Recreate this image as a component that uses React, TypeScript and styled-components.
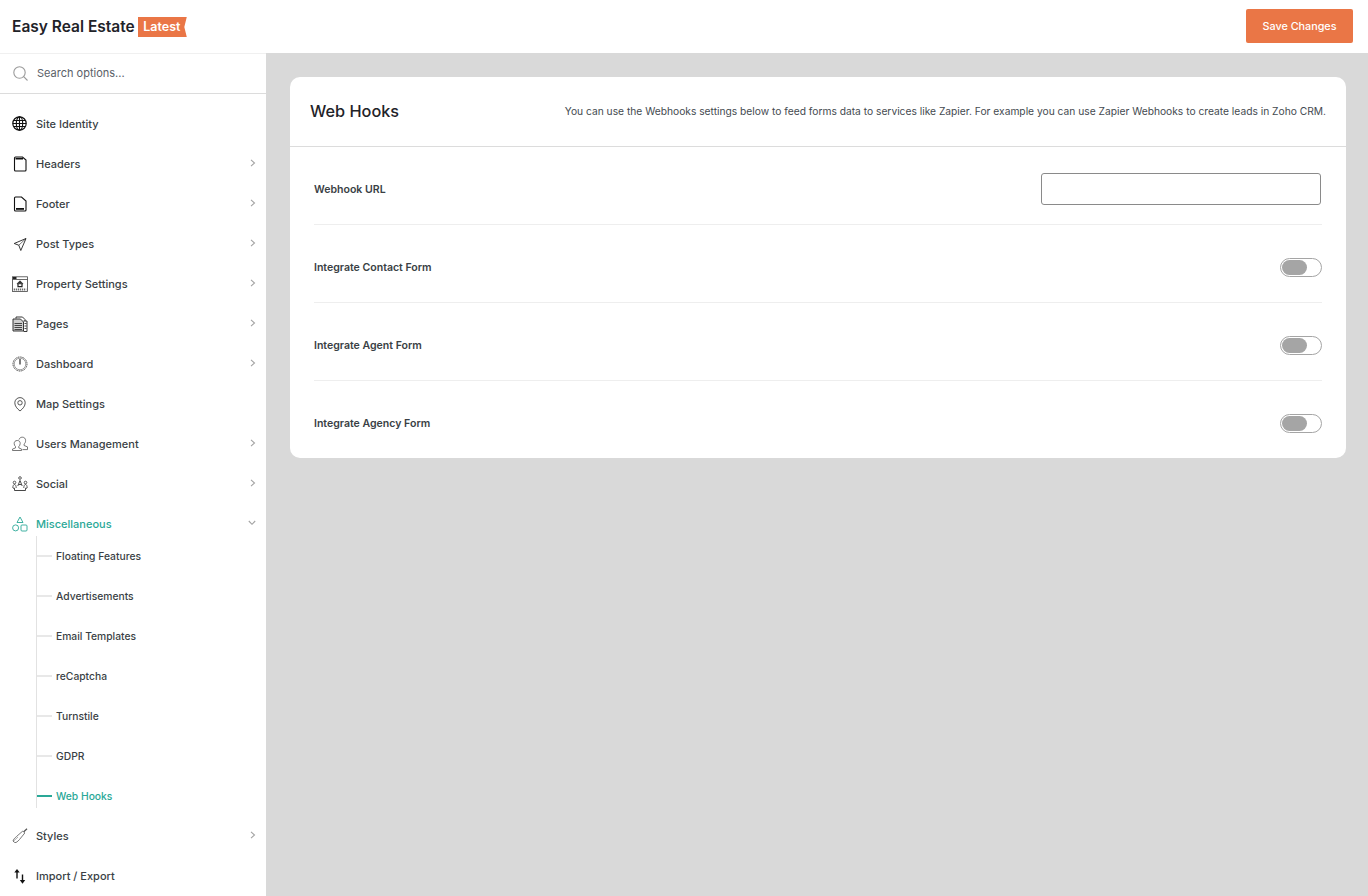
import React from "react";
import styled, { createGlobalStyle } from "styled-components";

const GlobalStyle = createGlobalStyle`
  html, body {
    margin: 0;
    padding: 0;
    height: 100%;
    overflow: hidden;
    background: #d9d9d9;
    font-family: Inter, "Noto Sans", sans-serif;
  }
  * { box-sizing: border-box; }
`;

const TEAL = "#2aa897";
const ORANGE = "#ea7646";

const Page = styled.div`
  width: 1368px;
  height: 896px;
  display: flex;
  flex-direction: column;
  overflow: hidden;
`;

const TopBar = styled.header`
  height: 53px;
  flex: none;
  background: #fff;
  display: flex;
  align-items: center;
  justify-content: space-between;
  padding: 0 15px 1px 12px;
`;

const Brand = styled.div`
  display: flex;
  align-items: center;
  gap: 3px;
`;

const BrandName = styled.span`
  font-size: 15.5px;
  line-height: 20px;
  font-weight: 600;
  margin-top: 1px;
  color: #1f2329;
`;

const Badge = styled.span`
  width: 49px;
  height: 20px;
  margin-top: 2px;
  background: ${ORANGE};
  color: #fff;
  font-size: 12.5px;
  line-height: 20px;
  font-weight: 600;
  padding-left: 5.5px;
  clip-path: polygon(0 0, 100% 0, 95% 50%, 100% 100%, 0 100%);
`;

const SaveButton = styled.button`
  width: 107px;
  height: 34px;
  border: 0;
  border-radius: 2px;
  background: ${ORANGE};
  color: #fff;
  font-family: inherit;
  font-size: 10.8px;
  font-weight: 500;
  padding: 0;
`;

const Body = styled.div`
  flex: 1;
  display: flex;
  min-height: 0;
`;

const Sidebar = styled.aside`
  width: 266px;
  flex: none;
  background: #fff;
  border-top: 1px solid #f0f0f0;
  overflow: hidden;
`;

const SearchRow = styled.div`
  height: 40px;
  display: flex;
  align-items: center;
  gap: 9px;
  padding: 0 13px 1px;
  border-bottom: 1px solid #dcdcdc;
`;

const SearchText = styled.span`
  font-size: 11px;
  color: #5a6068;
`;

const Nav = styled.nav`
  padding-top: 10px;
`;

const NavRow = styled.div<{ $active?: boolean }>`
  height: 40px;
  display: flex;
  align-items: center;
  padding: 0 10px 0 12px;
  color: ${(p) => (p.$active ? TEAL : "#3a3f45")};
  font-size: 11px;
  font-weight: ${(p) => (p.$active ? 500 : 450)};
`;

const IconSlot = styled.span`
  width: 16px;
  height: 16px;
  flex: none;
  margin-right: 8px;
  display: flex;
  svg { display: block; }
`;

const NavLabel = styled.span`
  flex: 1;
`;

const Arrow = styled.svg`
  flex: none;
  margin-top: -2px;
`;

const SubMenu = styled.div`
  position: relative;
  margin: -8px 0 0 36px;

  &::before {
    content: "";
    position: absolute;
    left: 0;
    top: 0;
    bottom: 8px;
    width: 1px;
    background: #e2e2e2;
  }
`;

const SubRow = styled.div<{ $active?: boolean }>`
  height: 40px;
  display: flex;
  align-items: center;
  gap: 4px;
  font-size: 10.3px;
  font-weight: 450;
  color: ${(p) => (p.$active ? TEAL : "#3a3f45")};

  &::before {
    content: "";
    width: 16px;
    height: 2px;
    background: ${(p) => (p.$active ? TEAL : "#e8e8e8")};
  }
`;

const Main = styled.main`
  flex: 1;
  padding: 24px 22px 0 24px;
`;

const Card = styled.section`
  background: #fff;
  border-radius: 10px;
  overflow: hidden;
`;

const CardHeader = styled.div`
  height: 70px;
  display: flex;
  align-items: center;
  justify-content: space-between;
  padding: 0 20px 2px;
  border-bottom: 1px solid #dcdcdc;
`;

const CardTitle = styled.h1`
  margin: 0;
  font-size: 16.3px;
  font-weight: 500;
  color: #1f2329;
`;

const CardNote = styled.p`
  margin: 0;
  font-size: 10.24px;
  color: #444a50;
`;

const Rows = styled.div`
  padding: 0 24px;
`;

const Row = styled.div`
  height: 78px;
  padding-top: 8px;
  display: flex;
  align-items: center;
  justify-content: space-between;
  border-bottom: 1px solid #eeeeee;
  &:last-child { border-bottom: 0; height: 77px; }
`;

const RowLabel = styled.label`
  font-size: 10.55px;
  font-weight: 600;
  color: #3a3f45;
`;

const UrlInput = styled.input`
  width: 280px;
  height: 32px;
  margin: 0 1px 2px 0;
  border: 1px solid #8a8a8a;
  border-radius: 3px;
  background: #fff;
  outline: none;
`;

const Toggle = styled.span`
  width: 42px;
  height: 19px;
  border: 1px solid #a5a5a5;
  border-radius: 10px;
  padding: 1px;
  display: flex;

  &::before {
    content: "";
    width: 25px;
    height: 15px;
    border-radius: 8px;
    background: #a5a5a5;
  }
`;

const Svg = ({ children, color = "#111" }: { children: React.ReactNode; color?: string }) => (
  <svg width="16" height="16" viewBox="0 0 16 16" fill="none" stroke={color} strokeWidth="1">
    {children}
  </svg>
);

const icons: Record<string, React.ReactNode> = {
  globe: (
    <Svg>
      <circle cx="7.5" cy="7.500" r="6.700" strokeWidth="1.200" />
      <ellipse cx="7.500" cy="7.500" rx="3.200" ry="6.700" strokeWidth="1.100" />
      <path d="M7.500 .8v13.400M.8 7.500h13.400M1.800 4.500h11.400M1.800 10.500h11.400" strokeWidth="1.100" />
    </Svg>
  ),
  header: (
    <Svg>
      <path d="M2.500 2a1 1 0 0 1 1-1h7L14 4v10a1 1 0 0 1-1 1H3.500a1 1 0 0 1-1-1z" strokeWidth="1.100" />
      <path d="M3.500 2.700h7.500" strokeWidth="1.600" />
    </Svg>
  ),
  footer: (
    <Svg>
      <path d="M2.500 2a1 1 0 0 1 1-1h6L14 5v9a1 1 0 0 1-1 1H3.500a1 1 0 0 1-1-1z" strokeWidth="1.100" />
      <path d="M4 12.900h8" strokeWidth="1.800" />
    </Svg>
  ),
  plane: (
    <Svg color="#222">
      <path d="M14 2.500 2.200 7.500l4.600 1.700 2 5.300z" strokeWidth="0.900" strokeLinejoin="round" />
      <path d="M6.800 9.200 14 2.500" strokeWidth="0.600" />
    </Svg>
  ),
  property: (
    <Svg color="#444">
      <rect x="0.500" y="0.800" width="15" height="14.700" strokeWidth="0.800" />
      <path d="M0.500 3.500h15" strokeWidth="0.800" />
      <path d="M1 2h3.500" strokeWidth="2" stroke="#222" />
      <path d="M5 7.800 8 4.800l3 3z" fill="#333" stroke="#222" strokeWidth="0.700" />
      <path d="M6 8v2.600h4V8" stroke="#222" strokeWidth="1.200" />
      <path d="M1.800 13.600h12.400" strokeWidth="2" strokeDasharray="1 1" />
    </Svg>
  ),
  pages: (
    <Svg color="#222">
      <path d="M4 2.500V1h6.500L13 3.500V5" strokeWidth="0.900" />
      <path d="M1 3h7.500l3 3v9H1z" strokeWidth="0.900" fill="#cfcfcf" />
      <path d="M11.500 5H15v10.500H11.500" strokeWidth="0.900" />
      <path d="M2.500 7.500h7.500M2.500 9.500h7.500M2.500 11.500h7.500M2.500 13.500h7.500M12.500 7.500h2M12.500 10h2M12.500 12.500h2" strokeWidth="0.800" />
    </Svg>
  ),
  gauge: (
    <Svg color="#444">
      <circle cx="8" cy="8" r="7" strokeWidth="1" strokeDasharray="1.200 0.600" />
      <circle cx="8" cy="8" r="5.800" strokeWidth="0.500" />
      <path d="M8 3v5.500" stroke="#111" strokeWidth="1.100" />
    </Svg>
  ),
  pin: (
    <Svg color="#444">
      <path d="M8 15C5 12.600 2.800 10 2.800 6.800a5.200 5.200 0 0 1 10.400 0C13.200 10 11 12.600 8 15z" strokeWidth="0.900" />
      <circle cx="8" cy="6.800" r="2.200" strokeWidth="0.900" />
    </Svg>
  ),
  users: (
    <Svg color="#555">
      <path d="M5.300 4.500c1.900 0 2.900 1.200 2.900 3 0 1.300-.7 2.500-1.400 3v1.400l2.800 1.200v1.400H.5v-1.400l3-1.200v-1.400c-.8-.5-1.300-1.700-1.300-3 0-1.800 1.100-3 3.100-3z" strokeWidth="0.800" />
      <path d="M7 3.600C7.500 2 8.700 1.200 10.300 1.200c2.100 0 3.300 1.400 3.300 3.400 0 1.500-.6 2.800-1.500 3.400v1.500l3.400 1.400v2.700h-5" strokeWidth="0.800" />
    </Svg>
  ),
  social: (
    <Svg color="#333">
      <circle cx="8" cy="2" r="1.300" strokeWidth="0.800" />
      <path d="M5.800 10 8 4.500l2.200 5.500M6.800 8.500h2.400" strokeWidth="0.900" />
      <circle cx="2.500" cy="6.500" r="1.300" strokeWidth="0.800" />
      <circle cx="13.500" cy="6.500" r="1.300" strokeWidth="0.800" />
      <path d="M.8 12c0-2 .6-3.500 1.700-3.500S4.200 10 4.200 12M11.800 12c0-2 .6-3.500 1.700-3.500s1.700 1.500 1.700 3.500" strokeWidth="0.800" />
      <path d="M1 12.200h1.500v2.300h11v-2.300H15" strokeWidth="0.900" />
    </Svg>
  ),
  shapes: (
    <Svg color={TEAL}>
      <path d="M8 1 11 6.500H5z" strokeWidth="0.900" strokeLinejoin="round" />
      <circle cx="3.600" cy="11.900" r="3" strokeWidth="0.900" />
      <rect x="9" y="9" width="6" height="6" rx="1" strokeWidth="0.900" />
    </Svg>
  ),
  dropper: (
    <Svg color="#555">
      <path d="M4.500 8.500 10.800 3l2 2L7.500 11.500c-1 1.200-2 2.200-3.500 3H2.800L1 13c.3-1.500 1.800-3 3.500-4.500z" strokeWidth="0.800" />
      <path d="M11.800 3.800 15 .8" strokeWidth="1.200" />
      <path d="M1 13.500 6 9" strokeWidth="0.500" />
    </Svg>
  ),
  transfer: (
    <Svg>
      <path d="M5 10.500V3" strokeWidth="1.400" />
      <path d="M5 1 7.700 4.600H2.300z" fill="#111" stroke="none" />
      <path d="M10.500 6.500v7" strokeWidth="1.400" />
      <path d="M10.500 15.700 7.800 12.100h5.400z" fill="#111" stroke="none" />
    </Svg>
  ),
};

const ChevronRight = () => (
  <Arrow width="6" height="8" viewBox="0 0 6 8" fill="none" stroke="#a3a3a3" strokeWidth="1.100">
    <path d="M1 .8 4.500 4 1 7.200" />
  </Arrow>
);

const ChevronDown = () => (
  <Arrow width="8" height="6" viewBox="0 0 8 6" fill="none" stroke="#a3a3a3" strokeWidth="1.100">
    <path d="M.8 1 4 4.300 7.200 1" />
  </Arrow>
);

const SearchIcon = () => (
  <svg width="15" height="15" viewBox="0 0 15 15" fill="none" stroke="#9b9b9b" strokeWidth="1.100">
    <circle cx="6.500" cy="6.500" r="5.700" />
    <path d="m10.700 10.700 3.800 3.800" />
  </svg>
);

type Item = { label: string; icon: string; arrow?: boolean };

const topItems: Item[] = [
  { label: "Site Identity", icon: "globe" },
  { label: "Headers", icon: "header", arrow: true },
  { label: "Footer", icon: "footer", arrow: true },
  { label: "Post Types", icon: "plane", arrow: true },
  { label: "Property Settings", icon: "property", arrow: true },
  { label: "Pages", icon: "pages", arrow: true },
  { label: "Dashboard", icon: "gauge", arrow: true },
  { label: "Map Settings", icon: "pin" },
  { label: "Users Management", icon: "users", arrow: true },
  { label: "Social", icon: "social", arrow: true },
];

const subItems = ["Floating Features", "Advertisements", "Email Templates", "reCaptcha", "Turnstile", "GDPR", "Web Hooks"];

const bottomItems: Item[] = [
  { label: "Styles", icon: "dropper", arrow: true },
  { label: "Import / Export", icon: "transfer" },
];

const NavItem = ({ item }: { item: Item }) => (
  <NavRow>
    <IconSlot>{icons[item.icon]}</IconSlot>
    <NavLabel>{item.label}</NavLabel>
    {item.arrow && <ChevronRight />}
  </NavRow>
);

const formRows = ["Integrate Contact Form", "Integrate Agent Form", "Integrate Agency Form"];

export default function App() {
  return (
    <Page>
      <GlobalStyle />
      <TopBar>
        <Brand>
          <BrandName>Easy Real Estate</BrandName>
          <Badge>Latest</Badge>
        </Brand>
        <SaveButton>Save Changes</SaveButton>
      </TopBar>
      <Body>
        <Sidebar>
          <SearchRow>
            <SearchIcon />
            <SearchText>Search options...</SearchText>
          </SearchRow>
          <Nav>
            {topItems.map((item) => (
              <NavItem key={item.label} item={item} />
            ))}
            <NavRow $active>
              <IconSlot>{icons.shapes}</IconSlot>
              <NavLabel>Miscellaneous</NavLabel>
              <ChevronDown />
            </NavRow>
            <SubMenu>
              {subItems.map((label) => (
                <SubRow key={label} $active={label === "Web Hooks"}>
                  {label}
                </SubRow>
              ))}
            </SubMenu>
            {bottomItems.map((item) => (
              <NavItem key={item.label} item={item} />
            ))}
          </Nav>
        </Sidebar>
        <Main>
          <Card>
            <CardHeader>
              <CardTitle>Web Hooks</CardTitle>
              <CardNote>
                You can use the Webhooks settings below to feed forms data to services like Zapier. For example you can use Zapier Webhooks to create leads in Zoho CRM.
              </CardNote>
            </CardHeader>
            <Rows>
              <Row>
                <RowLabel>Webhook URL</RowLabel>
                <UrlInput type="text" />
              </Row>
              {formRows.map((label) => (
                <Row key={label}>
                  <RowLabel>{label}</RowLabel>
                  <Toggle />
                </Row>
              ))}
            </Rows>
          </Card>
        </Main>
      </Body>
    </Page>
  );
}
